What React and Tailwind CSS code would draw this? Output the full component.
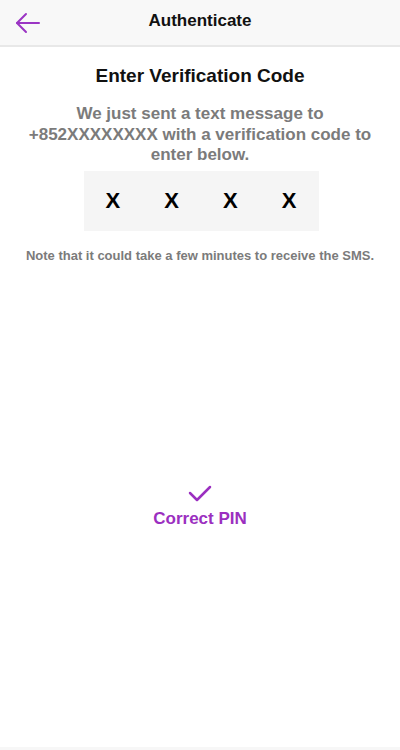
import React from 'react';

export default function App() {
  const digits = ['X', 'X', 'X', 'X'];

  return (
    <div className="w-[400px] h-[750px] bg-white flex flex-col font-['Liberation_Sans',Arial,sans-serif]">
      {/* Header */}
      <div className="h-[47px] bg-[#f8f8f8] border-b-2 border-[#e8e8e8] flex items-center relative">
        <button className="absolute left-[11px] top-[8px] p-1 text-[#9b35c4]">
          <svg width="26" height="22" viewBox="0 0 26 22" fill="none" stroke="currentColor" strokeWidth="2" strokeLinecap="round" strokeLinejoin="round">
            <path d="M24 11H2" />
            <path d="M11 2L2 11L11 20" />
          </svg>
        </button>
        <h1 className="flex-1 text-center text-[17px] font-bold text-[#111] -mt-[4px]">Authenticate</h1>
      </div>

      {/* Body */}
      <div className="flex flex-col items-center pt-[17px]">
        <h2 className="text-[19px] font-bold text-[#111] leading-[24px]">Enter Verification Code</h2>
        <p className="mt-[16px] px-[20px] text-center text-[17px] font-bold text-[#7b7b7b] leading-[20.5px]">
          We just sent a text message to +852XXXXXXXX with a verification code to enter below.
        </p>

        <div className="mt-[5px] w-[235px] h-[60px] bg-[#f5f5f5] grid grid-cols-4 items-center justify-items-center ml-[2px]">
          {digits.map((d, i) => (
            <span key={i} className="text-[22px] font-bold text-black">{d}</span>
          ))}
        </div>

        <p className="mt-[15px] text-[13px] font-bold text-[#7b7b7b]">
          Note that it could take a few minutes to receive the SMS.
        </p>
      </div>

      {/* Status */}
      <div className="flex flex-col items-center mt-[219px] text-[#9b2fc0]">
        <svg width="26" height="18" viewBox="0 0 26 18" fill="none" stroke="currentColor" strokeWidth="2.5" strokeLinecap="round" strokeLinejoin="round">
          <path d="M3 9L10 16L23 3" />
        </svg>
        <span className="mt-[4px] text-[17px] font-bold">Correct PIN</span>
      </div>

      <div className="mt-auto h-[3px] bg-[#f7f7f7]" />
    </div>
  );
}
